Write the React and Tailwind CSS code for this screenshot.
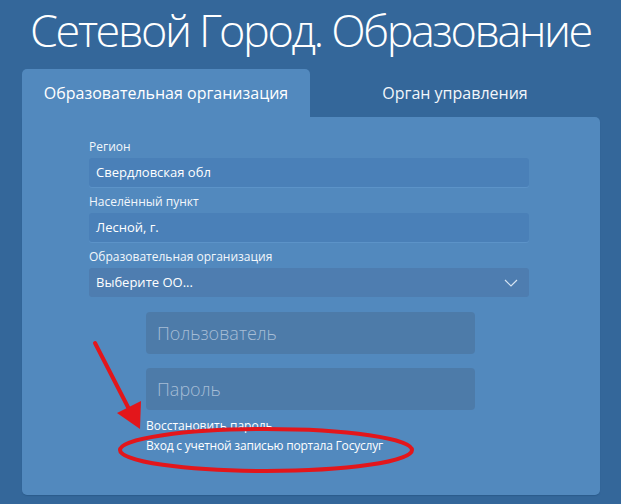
import React from "react";

const fields = [
  { label: "Регион", value: "Свердловская обл" },
  { label: "Населённый пункт", value: "Лесной, г." },
];

export default function App() {
  return (
    <div
      className="relative w-[621px] h-[504px] overflow-hidden bg-[#34679a] text-white"
      style={{ fontFamily: '"Open Sans", "Noto Sans", sans-serif' }}
    >
      <div className="h-[69px] pt-[4px] text-center whitespace-nowrap text-[45px] leading-[52px] font-light tracking-[-2.4px] text-white">
        Сетевой Город. Образование
      </div>

      {/* Tabs */}
      <div className="ml-[22px] w-[578px] flex h-[48px]">
        <div className="w-[288px] h-full flex items-center justify-center bg-[#5289be] rounded-t-[5px] text-[16px] text-white">
          Образовательная организация
        </div>
        <div className="flex-1 h-full flex items-center justify-center text-[16px] font-medium text-[#f2f6fb]">
          Орган управления
        </div>
      </div>

      {/* Panel */}
      <div className="ml-[22px] w-[578px] h-[378px] bg-[#5289be] rounded-b-[5px] rounded-tr-[5px] shadow-[0_1px_1px_#2b5b8c] pt-[22px]">
        <div className="ml-[67px] w-[440px]">
          {fields.map((f, i) => (
            <div key={i} className={i > 0 ? "mt-[7px]" : ""}>
              <div className="text-[12px] leading-[16px] mb-[3px] text-[#f3f7fb]">{f.label}</div>
              <div className="h-[29px] rounded-[3px] bg-[#4a80b8] flex items-center pl-[7px] text-[13px] text-white shadow-[0_1px_0_#5c93c8]">
                {f.value}
              </div>
            </div>
          ))}
          <div className="mt-[7px]">
            <div className="text-[12px] leading-[16px] mb-[3px] text-[#f3f7fb]">Образовательная организация</div>
            <div className="h-[29px] rounded-[3px] bg-[#4e7db0] flex items-center justify-between pl-[7px] pr-[11px] text-[13px] text-white">
              <span>Выберите ОО...</span>
              <svg width="14" height="8" viewBox="0 0 14 8" fill="none">
                <polyline points="1,1 7,7 13,1" stroke="#d6e4f2" strokeWidth="1.2" />
              </svg>
            </div>
          </div>

          <div className="ml-[57px] w-[329px] mt-[15px]">
            <div className="h-[42px] rounded-[4px] bg-[#4d7ba9] flex items-center pl-[11px] text-[18px] font-light text-[#a6bdd6]">
              Пользователь
            </div>
            <div className="mt-[14px] h-[42px] rounded-[4px] bg-[#4d7ba9] flex items-center pl-[11px] text-[18px] font-light text-[#a6bdd6]">
              Пароль
            </div>
            <div className="mt-[6px] text-[12px] leading-[20px] font-medium text-white">Восстановить пароль</div>
            <div className="text-[12px] leading-[20px] font-medium tracking-[-0.2px] text-white">
              Вход с учетной записью портала Госуслуг
            </div>
          </div>
        </div>
      </div>

      {/* Red annotation */}
      <svg className="absolute left-0 top-0 pointer-events-none" width="621" height="504" viewBox="0 0 621 504">
        <ellipse cx="266" cy="450" rx="146" ry="21" fill="none" stroke="#e3161b" strokeWidth="4" />
        <line x1="95" y1="343" x2="131" y2="413" stroke="#e3161b" strokeWidth="4" strokeLinecap="round" />
        <polygon points="117,413 141,401 140,429" fill="#e3161b" />
      </svg>
    </div>
  );
}
